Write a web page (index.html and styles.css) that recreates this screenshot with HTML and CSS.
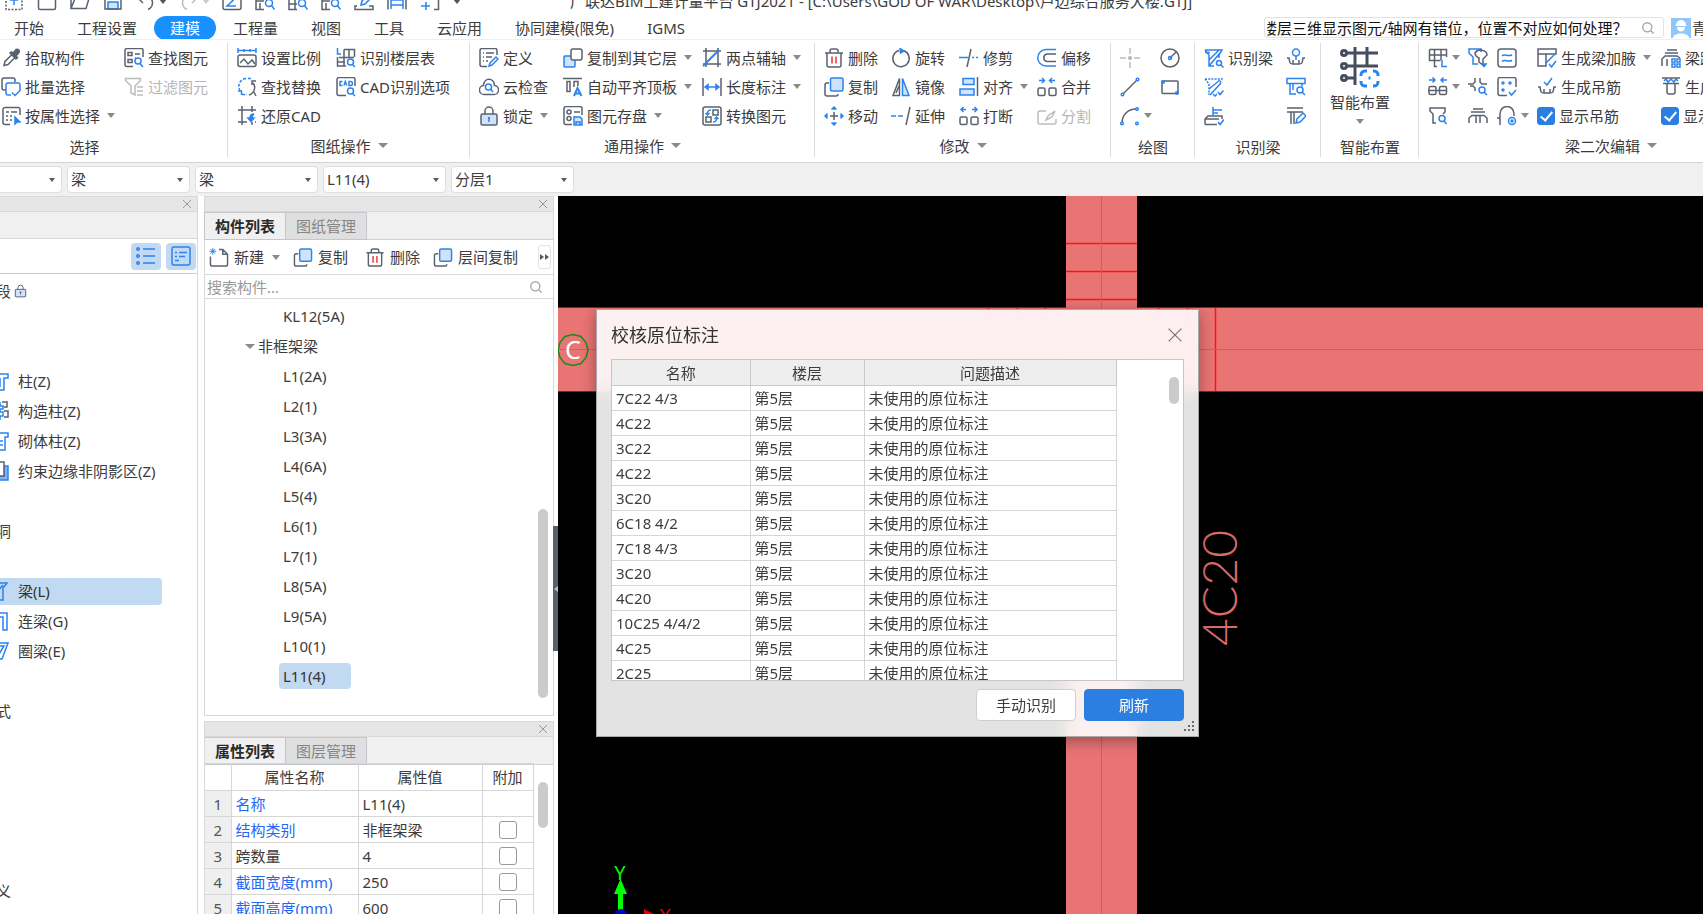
FILE: index.html
```html
<!DOCTYPE html>
<html lang="zh-CN">
<head>
<meta charset="utf-8">
<title>广联达BIM土建计量平台 GTJ2021</title>
<link rel="stylesheet" href="styles.css">
</head>
<body>
<svg class="sprite" aria-hidden="true">
  <symbol id="i-up" viewBox="0 0 20 20"><path stroke-dasharray="2 1.5" d="M2 3v15.500h16V3"/><path class="b fb" d="M10 14V8M7 9l3-4 3 4z"/></symbol>
  <symbol id="i-doc" viewBox="0 0 20 20"><path d="M1.500 2v15a1.500 1.500 0 0 0 1.500 1.500h14a1.500 1.500 0 0 0 1.500-1.500V2z"/></symbol>
  <symbol id="i-open" viewBox="0 0 20 20"><path d="M1 17.500V4h13v3M1 17.500l4-10h14l-3 10z"/></symbol>
  <symbol id="i-save" viewBox="0 0 20 20"><path class="b fl" d="M5 18v-7h10v7z"/><path d="M2 2v16h16V5l-3-3z"/></symbol>
  <symbol id="i-undo" viewBox="0 0 20 20"><path d="M3 7h9c6 0 6 9 0 11.500M7 3L2 7l5 5"/></symbol>
  <symbol id="i-redo" viewBox="0 0 20 20"><path class="x" d="M17 7H8c-6 0-6 9 0 11.500M13 3l5 4-5 5"/></symbol>
  <symbol id="i-sum" viewBox="0 0 20 20"><rect x="1" y="1" width="18" height="17.500" rx="2"/><path class="b" d="M14 5H6l5 4.500-6 5.500h9"/></symbol>
  <symbol id="i-find1" viewBox="0 0 20 20"><path d="M1 2v16.500h8M5 12v6M1 10h8"/><circle class="b" cx="14" cy="12" r="3.500"/><path class="b" d="M16.500 14.500l3 4"/></symbol>
  <symbol id="i-find2" viewBox="0 0 20 20"><path d="M1 2v16.500h8M1 7h17M1 13h8M7 2v16M13 2v5"/><circle class="b" cx="14" cy="12" r="3.500"/><path class="b" d="M16.500 14.500l3 4"/></symbol>
  <symbol id="i-pen" viewBox="0 0 20 20"><path d="M3 15H1v3.500h18V15h-4"/><path class="b" d="M7 14l1-4 6-6 3 3-6 6z"/></symbol>
  <symbol id="i-print" viewBox="0 0 20 20"><path class="b" d="M4 2v16M16 2v16M4 9h12M4 14h12"/><path d="M1 2v16.500M19 2v16.500"/></symbol>
  <symbol id="i-frame" viewBox="0 0 20 20"><path d="M14 18.500h4.500V6M3 6V2h8"/><path class="b" d="M6 11v8M1 15h9"/></symbol>

  <symbol id="i-pick" viewBox="0 0 20 20"><path d="M3 17.500l1-4 7-7 3 3-7 7z"/><path class="fg" d="M9 5l6 6 1.500-1.500-1.500-1.500 3-3.500c1-2-1-4-3-3l-3 3.500L10.500 4z"/></symbol>
  <symbol id="i-batch" viewBox="0 0 20 20"><path d="M5 13H3a2 2 0 0 1-2-2V3a2 2 0 0 1 2-2h9a2 2 0 0 1 2 2v2"/><path class="b" d="M10 18H7a2 2 0 0 1-2-2V8a2 2 0 0 1 2-2h10a2 2 0 0 1 2 2v5M11 15.500l3 3 5.500-5.500"/></symbol>
  <symbol id="i-attr" viewBox="0 0 20 20"><path d="M9 18.500H4a2 2 0 0 1-2-2v-13a2 2 0 0 1 2-2h13a2 2 0 0 1 2 2V9M5 6h3M10 6h6M5 10h2M9 10h2M5 14h2M9 14h2"/><path class="b fb" d="M14 11v7l2-2h3z"/></symbol>
  <symbol id="i-find" viewBox="0 0 20 20"><path d="M9 18.500H3a2 2 0 0 1-2-2v-14a2 2 0 0 1 2-2h14.500a1.500 1.500 0 0 1 1.500 1.500V9M11 6h5M11 10h1"/><rect x="4" y="4.500" width="4" height="3"/><rect x="4" y="11.500" width="4" height="3"/><circle class="b" cx="14" cy="13" r="3"/><path class="b" d="M16 15.500l3 3.500"/></symbol>
  <symbol id="i-filter" viewBox="0 0 20 20"><path class="x" d="M1.500 1.500h15v2L11 9v9l-4-2V9L1.500 3.500zM13 10h6M13 14h6M13 18h6"/></symbol>
  <symbol id="i-scale" viewBox="0 0 20 20"><path class="b" d="M1 2.500h18M1 0v5M19 0v5M7 1v3M13 1v3"/><rect x="1" y="7" width="18" height="11.500" rx="2"/><path d="M3 15l4-4 4 5 4-4 3 4"/></symbol>
  <symbol id="i-floor" viewBox="0 0 20 20"><path class="b" d="M1.500 0v6H5"/><path d="M8 1.500h10.500V9M8 1.500V18M13 1.500V9M3 9.500h15M1.500 9v9H10M1.500 14H9"/><circle class="b" cx="14.500" cy="14" r="3"/><path class="b" d="M16.500 16.500L19 19"/></symbol>
  <symbol id="i-swap" viewBox="0 0 20 20"><path class="b" stroke-dasharray="3 1.500" d="M9 1.500C3 2 0 8 3 13.500"/><path class="b" d="M1 14h3.500v4"/><path d="M12 18c6-2 7-9 4-12M19 4h-4v4M17 15l2 4"/><path class="b" stroke-dasharray="3 1.500" d="M5 17.500h5M11 1.500h4"/></symbol>
  <symbol id="i-cad" viewBox="0 0 20 20"><path d="M10 18.500H3a2 2 0 0 1-2-2v-14a2 2 0 0 1 2-2h14a2 2 0 0 1 2 2V9"/><path class="b" d="M6.500 4.500H4v4h2.500M8 8.500l1.300-4 1.500 4M13 4.500v4h1.500a2 2 0 0 0 0-4z"/><circle class="b" cx="14.500" cy="14" r="3"/><path class="b" d="M16.500 16.500L19 19"/></symbol>
  <symbol id="i-restore" viewBox="0 0 20 20"><path d="M1 4h18M1 16h9M5 0v19M15 0v6M15 16v3M18 16h1"/><path class="b fb" d="M17 8c-3 0-4 1-4 4h-2l3 3.500 3-3.500h-2c0-2 0-3 2-4z"/></symbol>
  <symbol id="i-define" viewBox="0 0 20 20"><path d="M8 18.500H3a2 2 0 0 1-2-2v-14a2 2 0 0 1 2-2h13a2 2 0 0 1 2 2V7M4 5h1M7 5h8M4 9h1M7 9h6M4 13h1M7 13h2"/><path class="b" d="M10 18l1-3 6-6 2 2-6 6z"/></symbol>
  <symbol id="i-cloud" viewBox="0 0 20 20"><path d="M5.500 17.500a4.500 4.500 0 0 1-1-9C5 0 15 0 15.500 8.500a4.500 4.500 0 0 1-1 9z"/><circle class="b" cx="9.500" cy="10" r="3"/><path class="b" d="M11.500 12l2.500 3"/></symbol>
  <symbol id="i-lock" viewBox="0 0 20 20"><path d="M6 8V5a4 4 0 0 1 8 0v3"/><rect class="fl" x="2" y="8" width="16" height="11" rx="1.500"/><path class="b fb" d="M10 11v5M9 12h2"/></symbol>
  <symbol id="i-copyto" viewBox="0 0 20 20"><rect class="b fl" x="1" y="8" width="11" height="11" rx="1"/><rect class="fw" x="8" y="1" width="11" height="11" rx="2"/></symbol>
  <symbol id="i-level" viewBox="0 0 20 20"><path d="M0 1.500h19M4 4.500h3v10H4zM11 10V4.500h4V9"/><path class="b" stroke-width="2" d="M11 19l3.500-8 4 8M12 16.500h5"/></symbol>
  <symbol id="i-store" viewBox="0 0 20 20"><path d="M9 18.500H3a2 2 0 0 1-2-2v-14a2 2 0 0 1 2-2h14a2 2 0 0 1 2 2V9M11 6h6M11 11h1"/><circle cx="6" cy="6" r="2"/><circle cx="6" cy="12.500" r="2"/><path class="b fl" d="M11 11h6l2 2v6h-8zM13 19v-3h4v3"/></symbol>
  <symbol id="i-axis" viewBox="0 0 20 20"><path d="M4 0v19M1 3h18M16 0v19M1 16h18"/><path class="b" stroke-width="2" d="M1 18L17 2"/></symbol>
  <symbol id="i-length" viewBox="0 0 20 20"><path d="M1 1v18M19 1v18"/><path class="b fb" d="M3 10h14M6 7.500L3 10l3 2.500zM14 7.500l3 2.500-3 2.500z"/></symbol>
  <symbol id="i-convert" viewBox="0 0 20 20"><rect x="1" y="1" width="18" height="18" rx="2"/><rect x="11" y="4" width="5" height="5"/><rect x="4" y="11" width="5" height="5"/><path class="b" d="M9 4C6 4 5 6 5.500 9M3.500 7l2 2 2-2M11 16c3 0 4-2 3.500-5M12.500 13l2-2 2 2"/></symbol>
  <symbol id="i-trash" viewBox="0 0 20 20"><path d="M1 5h18M6 5V3a2 2 0 0 1 2-2h4a2 2 0 0 1 2 2v2M3 5v12a2 2 0 0 0 2 2h10a2 2 0 0 0 2-2V5"/><path class="r" d="M8 8.500v7M12 8.500v7"/></symbol>
  <symbol id="i-copy" viewBox="0 0 20 20"><path d="M5 6H3a2 2 0 0 0-2 2v9a2 2 0 0 0 2 2h9a2 2 0 0 0 2-2"/><rect class="b fl" x="6.500" y="1" width="12.500" height="13" rx="1.500"/></symbol>
  <symbol id="i-move" viewBox="0 0 20 20"><path d="M10 6v8M6 10h8"/><path class="b" d="M7.500 3.500L10 1l2.500 2.500M7.500 16.500L10 19l2.500-2.500M3.500 7.500L1 10l2.500 2.500M16.500 7.500L19 10l-2.500 2.500M10 1v3M10 16v3M1 10h3M16 10h3"/></symbol>
  <symbol id="i-rotate" viewBox="0 0 20 20"><path d="M8 2.500a8.200 8.200 0 1 0 5 .3"/><path class="b fb" d="M9 .5l4 2.500-3.500 2z"/></symbol>
  <symbol id="i-mirror" viewBox="0 0 20 20"><path d="M8.500 1.500v17H2zM5 16L8 9"/><path class="b fl" d="M11.500 1.500v17H18z"/></symbol>
  <symbol id="i-extend" viewBox="0 0 20 20"><path class="b" stroke-dasharray="5 2" d="M0 10h14"/><path d="M19 1l-4 18"/></symbol>
  <symbol id="i-trim" viewBox="0 0 20 20"><path class="b" d="M0 9.500h9M13 9.500h2M17 9.500h2"/><path d="M12 1L8 19"/></symbol>
  <symbol id="i-align" viewBox="0 0 20 20"><rect class="b fl" x="4" y="1.500" width="11" height="6"/><rect class="b fl" x="1" y="12" width="14" height="6"/><path d="M18.500 0v19"/></symbol>
  <symbol id="i-break" viewBox="0 0 20 20"><path class="b" d="M2 3.500h5M4.500 1L2 3.500 4.500 6M13 3.500h5M15.500 1L18 3.500 15.500 6"/><rect x="1" y="11" width="7" height="7.500" rx="1.500"/><rect x="12" y="11" width="7" height="7.500" rx="1.500"/></symbol>
  <symbol id="i-offset" viewBox="0 0 20 20"><path class="b" d="M19 1.500H9a8 8 0 0 0 0 16.500h10"/><path d="M19 6H10a3.800 3.800 0 0 0 0 7.500h9"/></symbol>
  <symbol id="i-merge" viewBox="0 0 20 20"><path class="b" d="M2 3.500h5M5 1l2.500 2.500L5 6M13 3.500h5M15 1l-2.500 2.500L15 6"/><rect x="1" y="11" width="7" height="7.500" rx="1.500"/><rect x="12" y="11" width="7" height="7.500" rx="1.500"/></symbol>
  <symbol id="i-split" viewBox="0 0 20 20"><path class="x" d="M9 5H3a2 2 0 0 0-2 2v9a2 2 0 0 0 2 2h14a2 2 0 0 0 2-2v-3M9 14l2-4 7-5-3 6z"/></symbol>
  <symbol id="i-point" viewBox="0 0 20 20"><path class="x" d="M10 0v6M10 14v6M0 10h6M14 10h6"/><circle cx="10" cy="10" r="2" fill="#b5b5b5" stroke="none"/></symbol>
  <symbol id="i-circle" viewBox="0 0 20 20"><circle cx="10" cy="10" r="9"/><path d="M10 10l6-6"/><circle class="b" cx="10" cy="10" r="1.500"/></symbol>
  <symbol id="i-line" viewBox="0 0 20 20"><path d="M3 17L17 3"/><circle class="b" cx="2.500" cy="17.500" r="1.300"/><circle class="b" cx="17.500" cy="2.500" r="1.300"/></symbol>
  <symbol id="i-rect" viewBox="0 0 20 20"><rect x="2" y="4" width="16" height="12.500" rx="1"/><circle class="b" cx="3" cy="5" r="1.300"/><circle class="b" cx="17" cy="16" r="1.300"/></symbol>
  <symbol id="i-arc" viewBox="0 0 20 20"><path d="M2 17C2 9 8 3 16 3"/><circle class="b" cx="2" cy="17.500" r="1.300"/><circle class="b" cx="17" cy="3" r="1.300"/><circle class="b" cx="17" cy="17.500" r="1.300"/></symbol>
  <symbol id="i-beam" viewBox="0 0 20 20"><path class="b" d="M1 2h17l-3 5v3M1 2l4 5v11h5M5 12l10-10M5 18L16 5M1 4.500h5"/><circle class="b" cx="15" cy="15" r="2.500"/><path class="b" d="M17 17l2.500 2.500"/></symbol>
  <symbol id="i-beam2" viewBox="0 0 20 20"><path class="b" stroke-dasharray="2 1.200" d="M1 2h17l-2 4M1 2l4 5v11"/><path class="b" d="M5 12L16 3M6 18L17 6M9 17l2 2 2-2M14 15l2 2.500 3.500-4"/></symbol>
  <symbol id="i-check1" viewBox="0 0 20 20"><path d="M1 18.500h12M1 18.500V13l3-3h14v3M1 13h14"/><path class="b" d="M9 1v9M9 4h9M9 7h5M14 16l2 2.500 4-5"/></symbol>
  <symbol id="i-hang" viewBox="0 0 20 20"><circle class="b" cx="10" cy="4.500" r="3.500"/><path class="b" d="M10 8v4"/><path d="M1 10h2c1 4 0 6 4 6h6c4 0 3-2 4-6h2M7 12v4M13 12v4"/></symbol>
  <symbol id="i-tfind" viewBox="0 0 20 20"><path class="b" d="M1 1.500h18v5H1zM4 6.500V17h6M7 6.500V13M16 6.500v3"/><circle class="b" cx="14" cy="13" r="3"/><path class="b" d="M16 15l3 3"/></symbol>
  <symbol id="i-tedit" viewBox="0 0 20 20"><path d="M1 2h16M1 6h16M8 6v12M5 6v12"/><path class="b" d="M10 17l1-4 6-6 3 3-6 6z"/></symbol>
  <symbol id="i-smart" viewBox="0 0 40 42"><g stroke-width="3"><path d="M6 6h32M6 19h32M6 31h10M15 0v38M27 0v20"/><circle class="fw" cx="4" cy="6" r="2.500"/><circle class="fw" cx="4" cy="19" r="2.500"/><circle class="fw" cx="4" cy="31" r="2.500"/><path class="b" d="M21 29v-1a4 4 0 0 1 4-4h2M33 24h1a4 4 0 0 1 4 4v1M38 34v1a4 4 0 0 1-4 4h-1M27 39h-2a4 4 0 0 1-4-4v-1M28.500 31h2"/></g></symbol>
  <symbol id="i-grid" viewBox="0 0 20 20"><path d="M9 18.500H6.500V1M1.500 1.500h17V9M1.500 1.500v11h11M1.500 7h17M13 1v11"/><path class="b" d="M14 12v6.500h5"/></symbol>
  <symbol id="i-merge2" viewBox="0 0 20 20"><path class="b" d="M1 3h6M4.500 .5L7 3 4.500 5.500M13 3h6M15.500 .5L13 3l2.500 2.500"/><rect x="1" y="9.500" width="7" height="8" rx="1.500"/><rect x="11.500" y="9.500" width="7" height="8" rx="1.500"/><path d="M0 13.500h19"/></symbol>
  <symbol id="i-shape" viewBox="0 0 20 20"><path d="M8 17H5V8L2 5V2h15v4l-2 2"/><circle class="b" cx="14" cy="12.500" r="3"/><path class="b" d="M16 15l2.500 3"/></symbol>
  <symbol id="i-dbl" viewBox="0 0 20 20"><path class="b" d="M13 4V1H1v4l4 4v7h5"/><path d="M7 5c3-5 12-3 12 2l-4 4v6l-4-3v-4c-2-1-4-3-4-5z"/><path class="b fb" d="M14 16l2 2.500 2-2.500z"/></symbol>
  <symbol id="i-cross" viewBox="0 0 20 20"><path d="M7 1v4l-2 2H0M12 1v4l2 2h5M7 14v-3l-2-2H2"/><circle class="b" cx="14" cy="13" r="3"/><path class="b" d="M16 15l3 3"/></symbol>
  <symbol id="i-bars" viewBox="0 0 20 20"><path d="M5 3h10M3 6h14M1 17v-5l3-2.500h12l3 2.500v5M8 10v7M12 10v7"/></symbol>
  <symbol id="i-wave" viewBox="0 0 20 20"><rect x="1" y="1" width="18" height="18" rx="3"/><path class="b" d="M5 8c3-3 5 1 10-1M5 13.500c3-3 5 1 10-1"/></symbol>
  <symbol id="i-dots" viewBox="0 0 20 20"><path d="M10 18.500H3a2 2 0 0 1-2-2v-14a2 2 0 0 1 2-2h14a2 2 0 0 1 2 2V10"/><circle class="b" cx="6" cy="6" r="1"/><circle class="b" cx="13" cy="6" r="1"/><circle class="b" cx="6" cy="13" r="1"/><path class="b" d="M12 15l2.500 3L19 13"/></symbol>
  <symbol id="i-arch" viewBox="0 0 20 20"><path d="M0 12h3v7M3 12V8c0-10 14-10 14 0v2"/><circle class="b" cx="15" cy="15" r="3.500"/><circle class="b" cx="15" cy="15" r="1"/></symbol>
  <symbol id="i-haunch" viewBox="0 0 20 20"><path d="M1 1h18v5H9v12H1zM1 6h8"/><path class="b" d="M9 15l9-9M12 16l2.500 3L19 13"/></symbol>
  <symbol id="i-hcheck" viewBox="0 0 20 20"><path class="b" d="M7 5l3 3 5-7"/><path d="M1 10h2c1 4 0 6 4 6h6c4 0 3-2 4-6h2M7 12v4M13 12v4"/></symbol>
  <symbol id="i-span" viewBox="0 0 20 20"><path d="M6 2h10M4 5h13M1 18V11l3-3h12l3 2M6 11v7"/><path class="b" d="M11 11h3v3h-3zM16 11h3v3h-3zM11 16h3v3h-3zM16 16h3v3h-3z"/></symbol>
  <symbol id="i-bridge" viewBox="0 0 20 20"><path class="b" d="M3 4l2-2 2 3 3-3 3 3 2-3 2 2"/><path d="M1 1h18M2 6.500h16M6 6.500V15a2 2 0 0 0 2 2h4a2 2 0 0 0 2-2V6.500"/></symbol>
  <symbol id="i-search" viewBox="0 0 20 20"><circle class="s" cx="9" cy="9" r="6.500"/><path class="s" d="M14 14l4 4"/></symbol>
  <symbol id="i-list" viewBox="0 0 20 20"><path class="b" d="M7 3h12M7 10h12M7 17h12"/><circle class="b" cx="2" cy="3" r="1.200"/><circle class="b" cx="2" cy="10" r="1.200"/><circle class="b" cx="2" cy="17" r="1.200"/></symbol>
  <symbol id="i-card" viewBox="0 0 20 20"><rect class="b" x="1" y="1" width="18" height="18" rx="2"/><path class="b" d="M4 6.500h2M8 6.500h8M4 10.500h2M8 10.500h6M4 14.500h4"/></symbol>
  <symbol id="i-new" viewBox="0 0 20 20"><path d="M10 1.500h4l5 5V17a2 2 0 0 1-2 2H3a2 2 0 0 1-2-2V9M14 1.500v5h5"/><path class="b" stroke-width="1" d="M1 1l5 5M6 1L1 6M3.500 0v7M0 3.500h7"/></symbol>
  <symbol id="i-x" viewBox="0 0 20 20"><path d="M2 2l16 16M18 2L2 18"/></symbol>
  <symbol id="i-col" viewBox="0 0 20 20"><path class="b" d="M2 3h17v4h-4v12H8V7H2zM11 7v9"/></symbol>
  <symbol id="i-ccol" viewBox="0 0 20 20"><path d="M13 1h5v5h-3M15 10h4v6h-4"/><path class="b" d="M11 1v4h3v3h-3v3h3v4h-3v4M5 6h5M5 12h5"/></symbol>
  <symbol id="i-bcol" viewBox="0 0 20 20"><path class="b" d="M2 2h17v4h-3v13H6V6H2zM8 10h6M8 14h6"/></symbol>
  <symbol id="i-edge" viewBox="0 0 20 20"><path fill="#7db4f5" class="b" d="M5 15h10V5h4v14H5z"/><path class="fw" d="M3 1h12v14H3z"/></symbol>
  <symbol id="i-lbeam" viewBox="0 0 20 20"><path class="b" d="M1 2h17l-4 5v12h-4V9M2 18L14 4"/></symbol>
  <symbol id="i-gbeam" viewBox="0 0 20 20"><path class="b" d="M2 2h16v17h-4V6H2z"/></symbol>
  <symbol id="i-ebeam" viewBox="0 0 20 20"><path class="b" d="M1 2h18l-6 16H7L15 5H2"/></symbol>
  <symbol id="i-lock2" viewBox="0 0 20 20"><path d="M6 8V5a4 4 0 0 1 8 0v3"/><rect class="fl" x="2" y="7.500" width="16" height="11.500" rx="1"/><path d="M10 11v4.500M8.500 12h3"/></symbol>
</svg>

<header class="titlebar">
  <button class="ib" aria-label="上传"><svg class="ic"><use href="#i-up"/></svg></button>
  <button class="ib" aria-label="新建"><svg class="ic"><use href="#i-doc"/></svg></button>
  <button class="ib" aria-label="打开"><svg class="ic"><use href="#i-open"/></svg></button>
  <button class="ib" aria-label="保存"><svg class="ic"><use href="#i-save"/></svg></button>
  <button class="ib split" aria-label="撤销"><svg class="ic"><use href="#i-undo"/></svg><i class="caret dark"></i></button>
  <button class="ib split" aria-label="恢复"><svg class="ic"><use href="#i-redo"/></svg><i class="caret pale"></i></button>
  <button class="ib" aria-label="汇总计算"><svg class="ic"><use href="#i-sum"/></svg></button>
  <button class="ib" aria-label="查看工程量"><svg class="ic"><use href="#i-find1"/></svg></button>
  <button class="ib" aria-label="查看钢筋量"><svg class="ic"><use href="#i-find2"/></svg></button>
  <button class="ib" aria-label="查看计算式"><svg class="ic"><use href="#i-find1"/></svg></button>
  <button class="ib" aria-label="编辑钢筋"><svg class="ic"><use href="#i-pen"/></svg></button>
  <button class="ib" aria-label="钢筋三维"><svg class="ic"><use href="#i-print"/></svg></button>
  <button class="ib" aria-label="局部"><svg class="ic"><use href="#i-frame"/></svg></button>
  <button class="ib" aria-label="更多"><i class="caret dark"></i></button>
  <span class="apptitle">广联达BIM土建计量平台 GTJ2021 - [C:\Users\GOD OF WAR\Desktop\卢边综合服务大楼.GTJ]</span>
</header>

<nav class="tabs">
  <button class="tab">开始</button><button class="tab">工程设置</button><button class="tab active">建模</button><button class="tab">工程量</button><button class="tab">视图</button><button class="tab">工具</button><button class="tab">云应用</button><button class="tab">协同建模(限免)</button><button class="tab">IGMS</button>
  <div class="help">
    <input type="text" aria-label="帮助搜索" value="楼层三维显示图元/轴网有错位，位置不对应如何处理？">
    <svg class="mag"><use href="#i-search"/></svg>
  </div>
  <button class="user"><svg viewBox="0 0 20 20" class="avatar"><path fill="#8fc6fb" d="M0 0h20v20H0z"/><path fill="#fff" d="M5 7a5 5 0 0 1 10 0l1 1H4zM6 9h8c0 6-8 6-8 0zM2 20c0-6 16-6 16 0z"/></svg>青</button>
</nav>

<section class="ribbon">
  <div class="group g1">
    <div class="cols">
      <div class="col">
        <button class="cmd"><svg class="ic"><use href="#i-pick"/></svg>拾取构件</button>
        <button class="cmd"><svg class="ic"><use href="#i-batch"/></svg>批量选择</button>
        <button class="cmd"><svg class="ic"><use href="#i-attr"/></svg>按属性选择<i class="caret"></i></button>
      </div>
      <div class="col">
        <button class="cmd"><svg class="ic"><use href="#i-find"/></svg>查找图元</button>
        <button class="cmd" disabled><svg class="ic"><use href="#i-filter"/></svg>过滤图元</button>
      </div>
    </div>
    <div class="gt">选择</div>
  </div>
  <div class="group g2">
    <div class="cols">
      <div class="col">
        <button class="cmd"><svg class="ic"><use href="#i-scale"/></svg>设置比例</button>
        <button class="cmd"><svg class="ic"><use href="#i-swap"/></svg>查找替换</button>
        <button class="cmd"><svg class="ic"><use href="#i-restore"/></svg>还原CAD</button>
      </div>
      <div class="col">
        <button class="cmd"><svg class="ic"><use href="#i-floor"/></svg>识别楼层表</button>
        <button class="cmd"><svg class="ic"><use href="#i-cad"/></svg>CAD识别选项</button>
      </div>
    </div>
    <button class="gt">图纸操作<i class="caret big"></i></button>
  </div>
  <div class="group g3">
    <div class="cols">
      <div class="col">
        <button class="cmd"><svg class="ic"><use href="#i-define"/></svg>定义</button>
        <button class="cmd"><svg class="ic"><use href="#i-cloud"/></svg>云检查</button>
        <button class="cmd"><svg class="ic"><use href="#i-lock"/></svg>锁定<i class="caret"></i></button>
      </div>
      <div class="col">
        <button class="cmd"><svg class="ic"><use href="#i-copyto"/></svg>复制到其它层<i class="caret"></i></button>
        <button class="cmd"><svg class="ic"><use href="#i-level"/></svg>自动平齐顶板<i class="caret"></i></button>
        <button class="cmd"><svg class="ic"><use href="#i-store"/></svg>图元存盘<i class="caret"></i></button>
      </div>
      <div class="col">
        <button class="cmd"><svg class="ic"><use href="#i-axis"/></svg>两点辅轴<i class="caret"></i></button>
        <button class="cmd"><svg class="ic"><use href="#i-length"/></svg>长度标注<i class="caret"></i></button>
        <button class="cmd"><svg class="ic"><use href="#i-convert"/></svg>转换图元</button>
      </div>
    </div>
    <button class="gt">通用操作<i class="caret big"></i></button>
  </div>
  <div class="group g4">
    <div class="cols">
      <div class="col">
        <button class="cmd"><svg class="ic"><use href="#i-trash"/></svg>删除</button>
        <button class="cmd"><svg class="ic"><use href="#i-copy"/></svg>复制</button>
        <button class="cmd"><svg class="ic"><use href="#i-move"/></svg>移动</button>
      </div>
      <div class="col">
        <button class="cmd"><svg class="ic"><use href="#i-rotate"/></svg>旋转</button>
        <button class="cmd"><svg class="ic"><use href="#i-mirror"/></svg>镜像</button>
        <button class="cmd"><svg class="ic"><use href="#i-extend"/></svg>延伸</button>
      </div>
      <div class="col">
        <button class="cmd"><svg class="ic"><use href="#i-trim"/></svg>修剪</button>
        <button class="cmd"><svg class="ic"><use href="#i-align"/></svg>对齐<i class="caret"></i></button>
        <button class="cmd"><svg class="ic"><use href="#i-break"/></svg>打断</button>
      </div>
      <div class="col">
        <button class="cmd"><svg class="ic"><use href="#i-offset"/></svg>偏移</button>
        <button class="cmd"><svg class="ic"><use href="#i-merge"/></svg>合并</button>
        <button class="cmd" disabled><svg class="ic"><use href="#i-split"/></svg>分割</button>
      </div>
    </div>
    <button class="gt">修改<i class="caret big"></i></button>
  </div>
  <div class="group g5">
    <div class="cols">
      <div class="col">
        <button class="cmd" aria-label="点"><svg class="ic"><use href="#i-point"/></svg></button>
        <button class="cmd" aria-label="直线"><svg class="ic"><use href="#i-line"/></svg></button>
        <button class="cmd near" aria-label="弧"><svg class="ic"><use href="#i-arc"/></svg><i class="caret"></i></button>
      </div>
      <div class="col">
        <button class="cmd" aria-label="圆"><svg class="ic"><use href="#i-circle"/></svg></button>
        <button class="cmd" aria-label="矩形"><svg class="ic"><use href="#i-rect"/></svg></button>
      </div>
    </div>
    <div class="gt">绘图</div>
  </div>
  <div class="group g6">
    <div class="cols">
      <div class="col">
        <button class="cmd"><svg class="ic"><use href="#i-beam"/></svg>识别梁</button>
        <button class="cmd" aria-label="识别梁构件"><svg class="ic"><use href="#i-beam2"/></svg></button>
        <button class="cmd" aria-label="校核梁图元"><svg class="ic"><use href="#i-check1"/></svg></button>
      </div>
      <div class="col">
        <button class="cmd" aria-label="识别吊筋"><svg class="ic"><use href="#i-hang"/></svg></button>
        <button class="cmd" aria-label="校核原位标注"><svg class="ic"><use href="#i-tfind"/></svg></button>
        <button class="cmd" aria-label="编辑支座"><svg class="ic"><use href="#i-tedit"/></svg></button>
      </div>
    </div>
    <div class="gt">识别梁</div>
  </div>
  <div class="group g7">
    <button class="bigcmd"><svg class="bigic"><use href="#i-smart"/></svg>智能布置<i class="caret"></i></button>
    <div class="gt">智能布置</div>
  </div>
  <div class="group g8">
    <div class="cols">
      <div class="col">
        <button class="cmd near" aria-label="原位标注"><svg class="ic"><use href="#i-grid"/></svg><i class="caret"></i></button>
        <button class="cmd near" aria-label="重提梁跨"><svg class="ic"><use href="#i-merge2"/></svg><i class="caret"></i></button>
        <button class="cmd" aria-label="查改标高"><svg class="ic"><use href="#i-shape"/></svg></button>
      </div>
      <div class="col">
        <button class="cmd" aria-label="应用同名梁"><svg class="ic"><use href="#i-dbl"/></svg></button>
        <button class="cmd" aria-label="刷新支座"><svg class="ic"><use href="#i-cross"/></svg></button>
        <button class="cmd" aria-label="梁跨数据"><svg class="ic"><use href="#i-bars"/></svg></button>
      </div>
      <div class="col">
        <button class="cmd" aria-label="梁跨分类"><svg class="ic"><use href="#i-wave"/></svg></button>
        <button class="cmd" aria-label="生成侧面筋"><svg class="ic"><use href="#i-dots"/></svg></button>
        <button class="cmd near" aria-label="设置拱梁"><svg class="ic"><use href="#i-arch"/></svg><i class="caret"></i></button>
      </div>
      <div class="col">
        <button class="cmd"><svg class="ic"><use href="#i-haunch"/></svg>生成梁加腋<i class="caret"></i></button>
        <button class="cmd"><svg class="ic"><use href="#i-hcheck"/></svg>生成吊筋</button>
        <label class="cmd"><input type="checkbox" class="cb" checked>显示吊筋</label>
      </div>
      <div class="col">
        <button class="cmd"><svg class="ic"><use href="#i-span"/></svg>梁跨</button>
        <button class="cmd"><svg class="ic"><use href="#i-bridge"/></svg>生成</button>
        <label class="cmd"><input type="checkbox" class="cb" checked>显示</label>
      </div>
    </div>
    <button class="gt">梁二次编辑<i class="caret big"></i></button>
  </div>
</section>

<section class="optbar">
  <span class="sel"><select aria-label="楼层"><option></option></select></span>
  <span class="sel"><select aria-label="构件大类"><option>梁</option></select></span>
  <span class="sel"><select aria-label="构件类型"><option>梁</option></select></span>
  <span class="sel"><select aria-label="构件"><option>L11(4)</option></select></span>
  <span class="sel"><select aria-label="分层"><option>分层1</option></select></span>
</section>

<main class="work">
  <aside class="nav">
    <div class="phead"><button class="close" aria-label="关闭导航栏"><svg><use href="#i-x"/></svg></button></div>
    <div class="navtop"></div>
    <div class="viewbar">
      <button class="vb" aria-label="列表视图"><svg class="ic"><use href="#i-list"/></svg></button>
      <button class="vb" aria-label="卡片视图"><svg class="ic"><use href="#i-card"/></svg></button>
    </div>
    <ul class="navlist">
      <li class="head">段<svg class="lk"><use href="#i-lock2"/></svg></li>
      <li></li>
      <li></li>
      <li><button><svg class="ic"><use href="#i-col"/></svg>柱(Z)</button></li>
      <li><button><svg class="ic"><use href="#i-ccol"/></svg>构造柱(Z)</button></li>
      <li><button><svg class="ic"><use href="#i-bcol"/></svg>砌体柱(Z)</button></li>
      <li><button><svg class="ic"><use href="#i-edge"/></svg>约束边缘非阴影区(Z)</button></li>
      <li></li>
      <li class="head">洞</li>
      <li></li>
      <li><button class="on"><svg class="ic"><use href="#i-lbeam"/></svg>梁(L)</button></li>
      <li><button><svg class="ic"><use href="#i-gbeam"/></svg>连梁(G)</button></li>
      <li><button><svg class="ic"><use href="#i-ebeam"/></svg>圈梁(E)</button></li>
      <li></li>
      <li class="head">式</li>
      <li></li>
      <li></li>
      <li></li>
      <li></li>
      <li></li>
      <li class="head">义</li>
    </ul>
  </aside>

  <div class="mid">
    <section class="panel comp">
      <div class="phead"><button class="close" aria-label="关闭构件列表"><svg><use href="#i-x"/></svg></button></div>
      <div class="ptabs"><button class="pt on">构件列表</button><button class="pt">图纸管理</button></div>
      <div class="ptools">
        <button><svg class="ic"><use href="#i-new"/></svg>新建<i class="caret"></i></button>
        <button><svg class="ic"><use href="#i-copy"/></svg>复制</button>
        <button><svg class="ic"><use href="#i-trash"/></svg>删除</button>
        <button><svg class="ic"><use href="#i-copy"/></svg>层间复制</button>
        <button class="more" aria-label="更多工具"><i></i><i></i></button>
      </div>
      <div class="psearch">
        <input type="text" aria-label="搜索构件" placeholder="搜索构件...">
        <svg class="mag"><use href="#i-search"/></svg>
      </div>
      <ul class="tree">
        <li>KL12(5A)</li>
        <li class="parent"><i class="caret big"></i>非框架梁</li>
        <li>L1(2A)</li>
        <li>L2(1)</li>
        <li>L3(3A)</li>
        <li>L4(6A)</li>
        <li>L5(4)</li>
        <li>L6(1)</li>
        <li>L7(1)</li>
        <li>L8(5A)</li>
        <li>L9(5A)</li>
        <li>L10(1)</li>
        <li><span class="on">L11(4)</span></li>
      </ul>
      <div class="thumb t-tree"></div>
    </section>
    <section class="panel props">
      <div class="phead"><button class="close" aria-label="关闭属性列表"><svg><use href="#i-x"/></svg></button></div>
      <div class="ptabs"><button class="pt on">属性列表</button><button class="pt">图层管理</button></div>
      <table class="ptable">
        <colgroup><col class="c1"><col class="c2"><col class="c3"><col class="c4"></colgroup>
        <thead><tr><th></th><th>属性名称</th><th>属性值</th><th>附加</th></tr></thead>
        <tbody>
          <tr><th>1</th><td class="lnk">名称</td><td>L11(4)</td><td></td></tr>
          <tr><th>2</th><td class="lnk">结构类别</td><td>非框架梁</td><td class="ck"><input type="checkbox" class="cb" aria-label="附加 结构类别"></td></tr>
          <tr><th>3</th><td>跨数量</td><td>4</td><td class="ck"><input type="checkbox" class="cb" aria-label="附加 跨数量"></td></tr>
          <tr><th>4</th><td class="lnk">截面宽度(mm)</td><td>250</td><td class="ck"><input type="checkbox" class="cb" aria-label="附加 截面宽度"></td></tr>
          <tr><th>5</th><td class="lnk">截面高度(mm)</td><td>600</td><td class="ck"><input type="checkbox" class="cb" aria-label="附加 截面高度"></td></tr>
        </tbody>
      </table>
      <div class="thumb t-props"></div>
    </section>
    <button class="grip" aria-label="折叠面板"></button>
  </div>

  <section class="canvas">
    <svg class="draw" aria-hidden="true">
      <rect class="beam" x="508" y="0" width="71" height="100%"/>
      <rect class="beam" x="0" y="111" width="100%" height="85"/>
      <path class="edge" d="M0 111.500H508M579 111.500H1400M0 195.500H508M579 195.500H1400"/>
      <path class="bar" d="M508 47.500h71M508 75.500h71M508 103.500h71M430.500 112v83M459.500 112v83M487.500 112v83M600.500 112v83M629.500 112v83M657.500 112v83"/>
      <path class="center" d="M543.500 0V1000M0 153.500H1400"/>
      <path class="bubble" d="M15 138.500l8 2 5 6 2 7.500-2 7.500-5 6-8 2-8-2-5-6-2-7.500 2-7.500 5-6z"/>
      <text class="axis" x="15" y="163">C</text>
      <text class="mark" transform="translate(679 450) rotate(-90)">4C20</text>
      <path fill="#0f0" d="M60 718v-20h-4l6.500-15 6.500 15h-4v20z"/>
      <text class="ay" x="62" y="684">Y</text>
      <circle cx="63" cy="719" r="6" fill="#0000c8"/>
      <path fill="#e00000" d="M86 713l10 5-10 4z"/>
      <text class="ax" x="107" y="727">X</text>
    </svg>
    <div class="dialog" role="dialog" aria-labelledby="dlg">
      <div class="dhead"><h2 id="dlg">校核原位标注</h2><button class="dclose" aria-label="关闭"><svg><use href="#i-x"/></svg></button></div>
      <div class="dbox">
        <table class="dtable">
          <colgroup><col class="d1"><col class="d2"><col class="d3"></colgroup>
          <thead><tr><th>名称</th><th>楼层</th><th>问题描述</th></tr></thead>
          <tbody>
            <tr><td>7C22 4/3</td><td>第5层</td><td>未使用的原位标注</td></tr>
            <tr><td>4C22</td><td>第5层</td><td>未使用的原位标注</td></tr>
            <tr><td>3C22</td><td>第5层</td><td>未使用的原位标注</td></tr>
            <tr><td>4C22</td><td>第5层</td><td>未使用的原位标注</td></tr>
            <tr><td>3C20</td><td>第5层</td><td>未使用的原位标注</td></tr>
            <tr><td>6C18 4/2</td><td>第5层</td><td>未使用的原位标注</td></tr>
            <tr><td>7C18 4/3</td><td>第5层</td><td>未使用的原位标注</td></tr>
            <tr><td>3C20</td><td>第5层</td><td>未使用的原位标注</td></tr>
            <tr><td>4C20</td><td>第5层</td><td>未使用的原位标注</td></tr>
            <tr><td>10C25 4/4/2</td><td>第5层</td><td>未使用的原位标注</td></tr>
            <tr><td>4C25</td><td>第5层</td><td>未使用的原位标注</td></tr>
            <tr><td>2C25</td><td>第5层</td><td>未使用的原位标注</td></tr>
          </tbody>
        </table>
        <div class="thumb t-dlg"></div>
      </div>
      <div class="dfoot"><button class="btn">手动识别</button><button class="btn primary">刷新</button></div>
      <svg class="resize" viewBox="0 0 12 12" aria-hidden="true"><path d="M9 0h2v2H9zM5 4h2v2H5zM9 4h2v2H9zM1 8h2v2H1zM5 8h2v2H5zM9 8h2v2H9z"/></svg>
    </div>
  </section>
</main>
</body>
</html>
```
FILE: styles.css
```css
* { box-sizing: border-box; }

body {
  margin: 0;
  height: 100vh;
  display: flex;
  flex-direction: column;
  overflow: hidden;
  background: #fff;
  color: #3c3c3c;
  font: 15px/20px "Noto Sans", "Noto Sans CJK SC", sans-serif;
}

button, input, select {
  font: inherit;
  color: inherit;
  margin: 0;
  padding: 0;
  border: 0;
  background: none;
}

button { white-space: nowrap; }
ul { list-style: none; margin: 0; padding: 0; }
.sprite { display: none; }

/* icons */
svg { fill: none; stroke: #5a6270; stroke-width: 1.5; flex: none; }
.b { stroke: #2b83ee; }
.r { stroke: #e33; }
.x { stroke: #bdbdbd; }
.s { stroke: #a8a8a8; stroke-width: 2; }
.fb { fill: #2b83ee; }
.fl { fill: #cfe3fb; }
.fw { fill: #fff; }
.fg { fill: #5a6270; }
.ic { width: 20px; height: 20px; display: block; }

.caret {
  flex: none;
  border: 4px solid transparent;
  border-top: 5px solid #8a8a8a;
  border-bottom: 0;
}
.caret.big { border-left-width: 5px; border-right-width: 5px; }
.caret.dark { border-top-color: #555; }
.caret.pale { border-top-color: #ccc; }

/* title bar */
.titlebar {
  height: 15px;
  flex: none;
  display: flex;
  align-items: flex-end;
  gap: 13px;
  padding: 0 4px 4px;
  white-space: nowrap;
}
.ib { display: flex; align-items: center; height: 20px; }
.split { gap: 3px; width: 30px; }
.apptitle { margin-left: 96px; height: 20px; }

/* tabs */
.tabs {
  height: 25px;
  flex: none;
  display: flex;
  align-items: center;
  padding-top: 1px;
  overflow: hidden;
  border-bottom: 1px solid #efefef;
}
.tab { height: 24px; padding: 1px 16px 0; margin-right: 1px; border-radius: 12px; }
.tab:first-child { margin-left: -2px; }
.tab.active { background: #1890ff; color: #fff; }
.help {
  display: flex;
  align-items: center;
  width: 400px;
  height: 21px;
  flex: none;
  margin-left: auto;
  padding: 0 8px 0 2px;
  border: 1px solid #e2e2e2;
  border-radius: 3px;
}
.help input { flex: 1; min-width: 0; height: 19px; color: #111; text-indent: -5px; }
.mag { width: 14px; height: 14px; }
.user { display: flex; gap: 1px; margin: 0 -4px 0 7px; }
.avatar { width: 20px; height: 20px; stroke: none; }

/* ribbon */
.ribbon {
  flex: none;
  display: flex;
  height: 123px;
  overflow: hidden;
  border-bottom: 1px solid #d4d4d4;
}
.group {
  flex: none;
  display: flex;
  flex-direction: column;
  justify-content: space-between;
  padding: 3px 0 0 9px;
  position: relative;
}
.group::after {
  content: "";
  position: absolute;
  right: 0;
  top: 3px;
  bottom: 5px;
  border-right: 1px solid #dcdcdc;
}
.cols { display: grid; }
.col { display: flex; flex-direction: column; align-items: flex-start; }
.cmd { display: flex; align-items: center; gap: 4px; height: 29px; white-space: nowrap; }
.cmd .caret { margin-left: 3px; }
.near .caret { margin-left: 0; }
.cmd:disabled { color: #b5b5b5; }
.gt {
  display: flex;
  align-items: center;
  justify-content: center;
  gap: 7px;
  height: 31px;
  margin-left: -9px;
}
button.gt { padding-bottom: 2px; }
.g1 { width: 287px; margin-left: -59px; padding-left: 60px; }
.g1 .gt { margin-left: -60px; }
.g1 .cols { grid-template-columns: 123px auto; }
.g2 { width: 242px; }
.g2 .cols { grid-template-columns: 99px auto; }
.g3 { width: 345px; }
.g3 .cols { grid-template-columns: 84px 139px auto; }
.g4 { width: 296px; }
.g4 .cols { grid-template-columns: 67px 68px 78px auto; }
.g5 { width: 84px; }
.g5 .cols { grid-template-columns: 40px auto; }
.g6 { width: 126px; }
.g6 .cols { grid-template-columns: 82px auto; }
.g7 { width: 98px; }
.g8 { width: 384px; }
.g8 .cols { grid-template-columns: 40px 29px 40px 124px auto; }

.bigcmd {
  display: flex;
  flex-direction: column;
  align-items: center;
  align-self: flex-start;
  gap: 3px;
  padding-top: 4px;
}
.bigic { width: 40px; height: 42px; stroke: #454e5e; }
.bigcmd .caret { margin-top: 4px; }

.cb {
  appearance: none;
  width: 18px;
  height: 18px;
  flex: none;
  display: inline-block;
  border: 1px solid #9a9a9a;
  border-radius: 3px;
  background: #fff;
}
.cb:checked { background: #2b7fe0; border-color: #2b7fe0; }
.cb:checked::before {
  content: "";
  display: block;
  width: 5px;
  height: 10px;
  margin: 1px 0 0 5px;
  border: solid #fff;
  border-width: 0 2px 2px 0;
  transform: rotate(40deg);
}

/* option bar */
.optbar {
  flex: none;
  display: flex;
  gap: 5px;
  height: 33px;
  padding-top: 3px;
  background: #f0f0f0;
}
.sel { position: relative; flex: none; width: 123px; }
.sel:first-child { margin-left: -61px; }
.sel select {
  appearance: none;
  width: 100%;
  height: 27px;
  padding: 0 20px 2px 3px;
  border: 1px solid #dedede;
  border-radius: 4px;
  background: #fff;
}
.sel::after {
  content: "";
  position: absolute;
  right: 7px;
  top: 12px;
  border: 3px solid transparent;
  border-top: 4px solid #505a68;
  border-bottom: 0;
}

/* work area */
.work { flex: 1; min-height: 0; display: flex; }

.phead {
  flex: none;
  height: 15px;
  display: flex;
  align-items: center;
  justify-content: flex-end;
  padding-right: 5px;
  background: #e6e6e6;
  border-bottom: 1px solid #d8d8d8;
}
.close svg { display: block; width: 10px; height: 10px; stroke: #999; stroke-width: 2; }

.nav {
  flex: none;
  width: 198px;
  display: flex;
  flex-direction: column;
  border-right: 1px solid #d8d8d8;
  border-top: 1px solid #d8d8d8;
  overflow: hidden;
}
.navtop { flex: none; height: 27px; background: #f0f0f0; border-bottom: 1px solid #d8d8d8; }
.viewbar {
  flex: none;
  display: flex;
  justify-content: flex-end;
  align-items: center;
  gap: 5px;
  height: 35px;
  padding-right: 1px;
  border-bottom: 1px solid #ccc;
}
.vb { width: 30px; height: 27px; padding: 3px 5px; border-radius: 4px; background: #c1d9f1; }
.navlist { padding-top: 2px; }
.navlist li { height: 30px; display: flex; align-items: center; margin-left: -11px; }
.navlist button {
  display: flex;
  align-items: center;
  gap: 9px;
  width: 173px;
  height: 27px;
  border-radius: 4px;
}
.navlist .head { margin-left: -4px; gap: 3px; }
.lk { width: 13px; height: 14px; }
.on { color: #333; }
.navlist .on, .tree .on { background: #c1d9f1; }

.mid {
  position: relative;
  flex: none;
  width: 360px;
  display: flex;
  flex-direction: column;
  gap: 5px;
  padding: 0 6px;
}
.panel {
  position: relative;
  width: 350px;
  display: flex;
  flex-direction: column;
  border: 1px solid #d8d8d8;
}
.ptabs { flex: none; display: flex; height: 28px; background: #f0f0f0; border-bottom: 1px solid #d0d0d0; }
.pt { width: 82px; height: 28px; border: 1px solid #c3c7cc; background: #dfdfdf; color: #858585; }
.pt.on { margin-left: -1px; background: #f0f0f0; color: #2a2a2a; font-weight: bold; }
.pt + .pt { margin-left: -1px; }
.ptools {
  display: flex;
  align-items: center;
  gap: 17px;
  height: 35px;
  padding: 0 2px 0 4px;
  border-bottom: 1px solid #d8d8d8;
}
.ptools button { display: flex; align-items: center; gap: 5px; }
.ptools button .caret { margin-left: 3px; }
.ptools .ic { width: 20px; height: 19px; }
.ptools button:first-child { margin-right: -4px; }
.ptools button:nth-child(4) { margin-right: auto; margin-left: -4px; }
.ptools .more {
  width: 13px;
  height: 24px;
  justify-content: center;
  gap: 1px;
  border: 1px solid #e2e2e2;
  border-radius: 3px;
}
.more i { border: 3px solid transparent; border-left: 4px solid #505a68; border-right: 0; }
.psearch {
  display: flex;
  align-items: center;
  height: 24px;
  padding: 0 10px 0 2px;
  border-bottom: 1px solid #d8d8d8;
}
.psearch input { flex: 1; min-width: 0; height: 22px; }
.psearch input::placeholder { color: #999; }
.tree { padding: 2px 0 24px; }
.tree li { height: 30px; display: flex; align-items: center; padding-left: 78px; }
.tree .parent { padding-left: 40px; gap: 3px; }
.tree .on { width: 72px; height: 26px; line-height: 26px; margin-left: -4px; padding-left: 4px; border-radius: 4px; }
.thumb { position: absolute; width: 10px; border-radius: 5px; background: #cbcbcb; }
.t-tree { right: 5px; top: 312px; height: 189px; }
.t-props { right: 5px; top: 60px; height: 46px; }
.t-dlg { right: 4px; top: 17px; height: 27px; }

.props { flex: 1; min-height: 0; overflow: hidden; border-bottom: 0; }
.ptable { border-collapse: collapse; table-layout: fixed; width: 328px; margin-top: -2px; }
.ptable .c1 { width: 26px; }
.ptable .c2 { width: 127px; }
.ptable .c3 { width: 124px; }
.ptable .c4 { width: 51px; }
.ptable th, .ptable td {
  height: 26px;
  padding: 0 4px;
  border: 1px solid #d6d6d6;
  border-left: 0;
  font-weight: normal;
  line-height: 20px;
  white-space: nowrap;
}
.ptable thead th { height: 27px; }
.ptable tbody th { background: #efefef; padding: 0; color: #555; }
.ptable .lnk { color: #2468f2; }
.ptable .ck { text-align: center; padding: 0; }
.ck .cb { display: block; margin: 0 auto; }

.grip {
  position: absolute;
  right: 0;
  top: 330px;
  width: 5px;
  height: 125px;
  background: #56606e;
}
.grip::after {
  content: "";
  display: block;
  border: 3px solid transparent;
  border-right: 4px solid #b8bec6;
  border-left: 0;
}

/* drawing */
.canvas { position: relative; flex: 1; min-width: 0; background: #000; overflow: hidden; }
.draw { position: absolute; width: 100%; height: 100%; stroke: none; }
.beam { fill: #e97474; }
.edge { stroke: #6a3030; stroke-width: 1; }
.bar { stroke: #ff1414; stroke-width: 1.5; }
.center { stroke: #808080; stroke-width: 1; }
.bubble { stroke: #1a8c1a; stroke-width: 1.5; }
.axis { fill: #fff; font: 25px "Noto Sans", sans-serif; text-anchor: middle; }
.mark { fill: #d86a6a; font: 300 48px Lato, sans-serif; }
.ay { fill: #0f0; font: 20px "Noto Sans", sans-serif; text-anchor: middle; }
.ax { fill: #e00000; font: 20px "Noto Sans", sans-serif; text-anchor: middle; }

/* dialog */
.dialog {
  position: absolute;
  left: 38px;
  top: 113px;
  width: 603px;
  padding: 0 14px 15px;
  border: 1px solid #a9a9a9;
  background: rgba(255, 255, 255, 0.89);
  backdrop-filter: blur(9px);
  box-shadow: 0 4px 14px rgba(0, 0, 0, 0.35);
}
.dhead { display: flex; align-items: center; justify-content: space-between; height: 49px; }
.dhead h2 { margin: 0; font-size: 18px; line-height: 24px; font-weight: normal; color: #333; }
.dclose { padding-right: 1px; }
.dclose svg { display: block; width: 16px; height: 16px; stroke: #777; }
.dbox { position: relative; height: 322px; overflow: hidden; background: #fff; border: 1px solid #c6c6c6; }
.dtable { border-collapse: collapse; table-layout: fixed; width: 504px; margin: -1px 0 0; }
.dtable .d1 { width: 138px; }
.dtable .d2 { width: 114px; }
.dtable .d3 { width: 252px; }
.dtable th, .dtable td {
  height: 25px;
  padding: 0 4px;
  border: 1px solid #d6d6d6;
  border-left: 0;
  font-weight: normal;
  line-height: 20px;
  text-align: left;
  white-space: nowrap;
}
.dtable th { height: 26px; background: #eee; text-align: center; border-color: #c9c9c9; }
.dfoot { display: flex; justify-content: flex-end; gap: 8px; padding-top: 8px; }
.btn { width: 100px; height: 32px; border: 1px solid #cfcfcf; border-radius: 4px; background: #fff; }
.btn.primary { background: #2b7fe0; border-color: #2b7fe0; color: #fff; }
.resize { position: absolute; right: 3px; bottom: 3px; width: 12px; height: 12px; fill: #6b6b6b; stroke: none; }
```
